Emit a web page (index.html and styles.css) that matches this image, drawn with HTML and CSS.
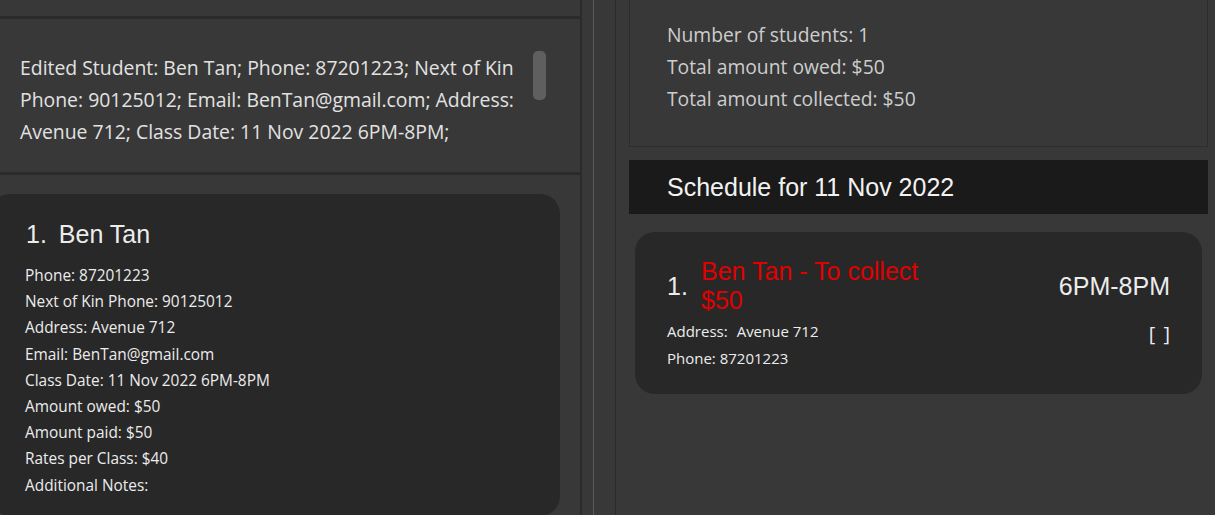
FILE: index.html
```html
<!DOCTYPE html>
<html>
<head>
<meta charset="utf-8">
<link rel="stylesheet" href="styles.css">
</head>
<body>
<div class="app">
  <div class="left">
    <div class="top-strip"></div>
    <div class="result">
      <div class="result-text">Edited Student: Ben Tan; Phone: 87201223; Next of Kin Phone: 90125012; Email: BenTan@gmail.com; Address: Avenue 712; Class Date: 11 Nov 2022 6PM-8PM;</div>
      <div class="scroll-track"><div class="scroll-thumb"></div></div>
    </div>
    <div class="student-list">
      <div class="student-card">
        <div class="student-title"><span class="idx">1.</span><span>Ben Tan</span></div>
        <div class="student-details">
          <div>Phone: 87201223</div>
          <div>Next of Kin Phone: 90125012</div>
          <div>Address: Avenue 712</div>
          <div>Email: BenTan@gmail.com</div>
          <div>Class Date: 11 Nov 2022 6PM-8PM</div>
          <div>Amount owed: $50</div>
          <div>Amount paid: $50</div>
          <div>Rates per Class: $40</div>
          <div>Additional Notes:</div>
        </div>
      </div>
    </div>
  </div>
  <div class="divider">
    <div class="div-dark"></div>
    <div class="div-gap1"></div>
    <div class="div-light"></div>
    <div class="div-gap2"></div>
    <div class="div-dark1"></div>
    <div class="div-gap3"></div>
  </div>
  <div class="right">
    <div class="stats">
      <div>Number of students: 1</div>
      <div>Total amount owed: $50</div>
      <div>Total amount collected: $50</div>
    </div>
    <div class="schedule-header">Schedule for 11 Nov 2022</div>
    <div class="schedule-card">
      <div class="sched-top">
        <span class="sched-idx">1.</span>
        <span class="sched-name">Ben Tan - To collect $50</span>
        <span class="sched-time">6PM-8PM</span>
      </div>
      <div class="sched-bottom">
        <div class="sched-info">
          <div><span class="lbl">Address:</span>Avenue 712</div>
          <div>Phone: 87201223</div>
        </div>
        <div class="sched-check">[ ]</div>
      </div>
    </div>
  </div>
</div>
</body>
</html>
```
FILE: styles.css
```css
html, body {
  margin: 0;
  padding: 0;
  background: #383838;
  overflow: hidden;
}
.app {
  display: flex;
  width: 1215px;
  height: 515px;
  overflow: hidden;
  background: #383838;
}
.left {
  width: 580px;
  flex: none;
  display: flex;
  flex-direction: column;
}
.top-strip {
  height: 16px;
  flex: none;
}
.result {
  height: 153px;
  flex: none;
  border-top: 3px solid #2b2b2b;
  border-bottom: 3px solid #2b2b2b;
  display: flex;
  box-sizing: content-box;
}
.result-text {
  width: 505px;
  padding: 33px 0 0 20px;
  font-family: "Open Sans", sans-serif;
  font-size: 19.4px;
  line-height: 32px;
  color: #e2e2e2;
}
.scroll-track {
  padding: 32px 0 0 8px;
}
.scroll-thumb {
  width: 13px;
  height: 49px;
  background: #5f5f5f;
  border-radius: 5px;
}
.student-list {
  padding-top: 19px;
  flex: none;
}
.student-card {
  margin-left: -10px;
  width: 570px;
  height: 322px;
  background: #282828;
  border-radius: 20px;
  padding: 26px 0 0 36px;
  box-sizing: border-box;
  color: #ececec;
}
.student-title {
  font-family: "Liberation Sans", Arial, sans-serif;
  font-size: 25px;
  line-height: 29px;
  display: flex;
  gap: 12px;
}
.student-details {
  margin-top: 14px;
  font-family: "Open Sans", sans-serif;
  font-size: 15.4px;
  line-height: 26.2px;
  margin-left: -1px;
}
.divider {
  display: flex;
  flex: none;
}
.div-dark { width: 2px; background: #2b2b2b; }
.div-gap1 { width: 11px; }
.div-light { width: 1px; background: #5a5a5a; }
.div-gap2 { width: 21px; }
.div-dark1 { width: 1px; background: #2b2b2b; }
.div-gap3 { width: 13px; }
.right {
  width: 579px;
  flex: none;
  display: flex;
  flex-direction: column;
}
.stats {
  height: 127px;
  flex: none;
  border: 1px solid #2d2d2d;
  border-top: none;
  padding: 19px 0 0 37px;
  font-family: "Open Sans", sans-serif;
  font-size: 19.3px;
  line-height: 32px;
  color: #cdcdcd;
}
.schedule-header {
  flex: none;
  margin-top: 13px;
  height: 54px;
  background: #1a1a1a;
  color: #f2f2f2;
  font-family: "Liberation Sans", Arial, sans-serif;
  font-size: 25px;
  line-height: 54px;
  padding-left: 38px;
}
.schedule-card {
  flex: none;
  margin: 18px 6px 0 6px;
  height: 162px;
  background: #282828;
  border-radius: 20px;
  padding: 25px 32px 0 32px;
  box-sizing: border-box;
  color: #ececec;
}
.sched-top {
  display: flex;
  align-items: center;
  font-family: "Liberation Sans", Arial, sans-serif;
  font-size: 25px;
  line-height: 29px;
}
.sched-idx {
  width: 34px;
  flex: none;
}
.sched-name {
  color: #e00000;
  width: 240px;
}
.sched-time {
  margin-left: auto;
}
.sched-bottom {
  display: flex;
  margin-top: 3px;
  font-family: "Open Sans", sans-serif;
  font-size: 15px;
  line-height: 27px;
}
.lbl {
  margin-right: 9px;
}
.sched-check {
  margin-left: auto;
  font-size: 20px;
  line-height: 27px;
  word-spacing: 3px;
  padding-top: 2px;
}
```
